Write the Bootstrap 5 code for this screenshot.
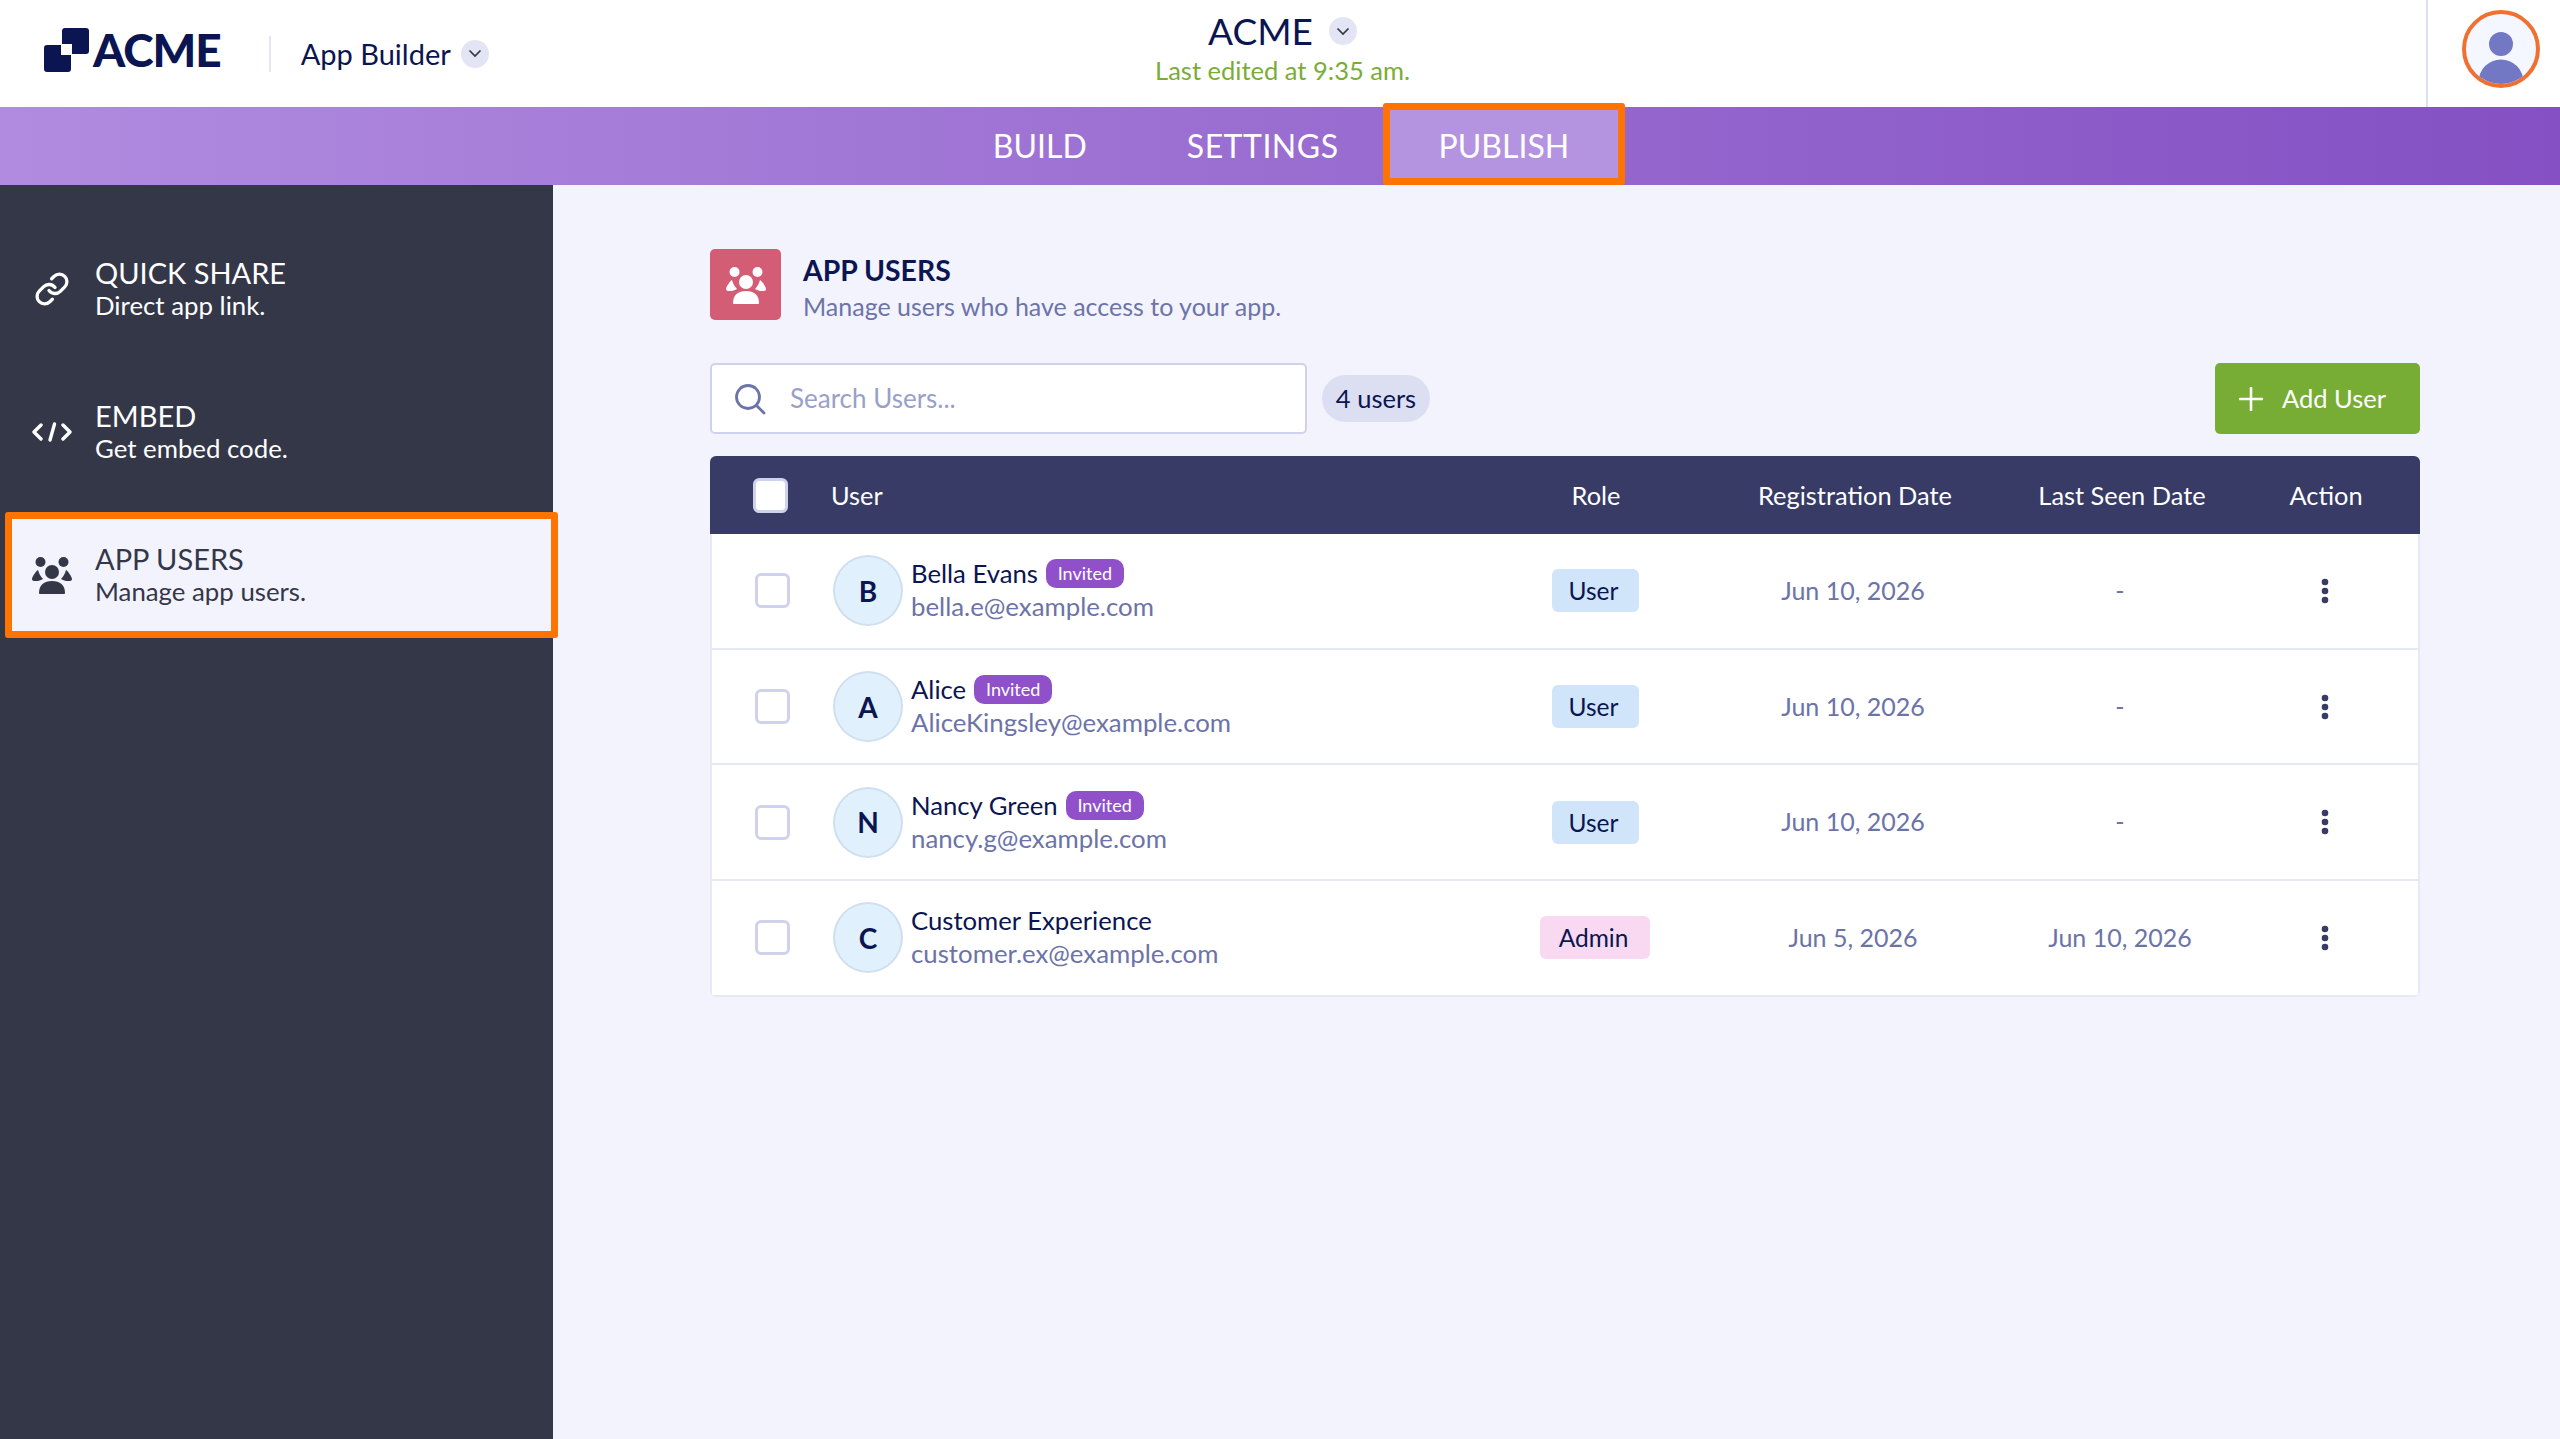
<!DOCTYPE html>
<html lang="en">
<head>
    <meta charset="UTF-8">
    <meta name="viewport" content="width=device-width, initial-scale=1.0">
    <title>App Users</title>
    <link rel="stylesheet" href="https://cdn.jsdelivr.net/npm/bootstrap@5.3.0/dist/css/bootstrap.min.css">
    <style>
        body { font-family: "Lato", "Liberation Sans", sans-serif; font-size: 25px; color: #0a1551; background: #f3f3fe; height: 100vh; }
        .top-bar { height: 107px; background: #fff; }
        .bar-side { flex: 1 1 0; }
        .logo-wrap { padding: 0 0 7px 44px; }
        .logo-text { font-size: 46px; font-weight: 900; line-height: 1; letter-spacing: -1px; margin-left: 3px; }
        .logo-divider { width: 2px; height: 36px; background: #e3e5f5; margin: 0 30px 0 48px; }
        .builder-name { font-size: 29px; margin-right: 10px; }
        .chevron-dot { width: 28px; height: 28px; background: #e3e5f5; }
        .app-block { padding: 9px 0 0 5px; }
        .app-name { font-size: 37px; line-height: 44px; }
        .last-edited { font-size: 25.500px; line-height: 34px; color: #7aad37; }
        .profile-box { width: 134px; border-left: 2px solid #dde0f3; padding: 0 20px 10px 0; }
        .profile-circle { width: 78px; height: 78px; border: 4px solid #f07030; background: #f4f7ff; overflow: hidden; }
        .tab-bar { height: 78px; padding-left: 2px; background: linear-gradient(90deg, #b08bdf, #8450c3); }
        .tab-link { padding: 0 50px; font-size: 32px; color: #fff; text-decoration: none; line-height: 78px; }
        .tab-settings { letter-spacing: .5px; }
        .tab-link.active { background: #b494e0; position: relative; }
        .tab-link.active::after, .side-item.active::after { content: ""; position: absolute; border: 7px solid #ff7300; border-radius: 3px; }
        .tab-link.active::after { inset: -4px -6px 0; }
        .side-panel { width: 553px; background: #343748; padding: 48px 2px 0 12px; gap: 31px; }
        .side-item { height: 112px; padding-left: 20px; gap: 23px; color: #fff; }
        .side-item.active { background: #f3f3fe; color: #343748; position: relative; }
        .side-item.active::after { inset: -7px; }
        .side-icon-sm { margin: 0 2px; }
        .side-title { font-size: 29px; line-height: 32px; margin-bottom: 1px; }
        .side-sub { font-size: 25.800px; line-height: 31px; }
        .content { padding: 64px 140px 0 157px; }
        .page-head { height: 71px; gap: 22px; }
        .page-tile { width: 71px; height: 71px; background: #d45d76; border-radius: 5px; }
        .page-title { font-size: 28.400px; line-height: 32px; font-weight: 700; margin-top: 5px; }
        .page-sub { font-size: 25px; line-height: 28px; margin-top: 6px; color: #6c73a8; }
        .tool-row { margin-top: 43px; }
        .search-box { width: 597px; height: 71px; background: #fff; border: 2px solid #ced2ec; border-radius: 5px; padding-left: 22px; gap: 24px; }
        .search-box input { border: 0; outline: 0; padding: 0; font-size: 26px; color: #0a1551; flex: 1; min-width: 0; background: transparent; }
        .search-box input::placeholder { color: #9a9fc9; }
        .count-pill { height: 47px; width: 108px; background: #dcdff1; margin-left: 15px; font-size: 25.500px; }
        .add-btn { width: 205px; height: 71px; padding: 0 0 0 24px; background: #78ad35; color: #fff; font-size: 25.500px; border: 0; border-radius: 5px; gap: 19px; }
        .users-wrap { margin-top: 22px; border-radius: 6px; overflow: hidden; }
        .users-table { table-layout: fixed; border-collapse: separate; border-spacing: 0; width: 1710px; margin: 0; }
        .col-tick { width: 115px; }
        .col-user { width: 669px; }
        .col-role { width: 204px; }
        .col-reg { width: 314px; }
        .col-seen { width: 220px; }
        .col-action { width: 188px; }
        .users-table th { height: 78px; background: #373b66; color: #fff; font-weight: 400; font-size: 25.400px; border: 0; padding: 0; vertical-align: middle; }
        .users-table th.th-user { padding-left: 6px; }
        .users-table td { height: 115.700px; background: #fff; border: 0; border-bottom: 2px solid #e6e8f7; padding: 0 4px 0 0; vertical-align: middle; font-size: 25px; color: #6c73a8; }
        .users-table td:first-child { border-left: 2px solid #e6e8f7; }
        .users-table td:last-child { border-right: 2px solid #e6e8f7; padding-right: 0; }
        .users-table td.td-role { padding-right: 2px; }
        .tick { width: 35px; height: 35px; margin: 0 0 0 43px; border: 3px solid #ced2ec; border-radius: 6px; background-color: #fff; float: none; }
        .user-avatar { width: 70px; height: 71px; background: #e0f1fd; border: 2px solid #cfdff0; color: #0a1551; font-size: 28px; font-weight: 700; flex-shrink: 0; margin-left: 8px; }
        .user-text { padding-bottom: 1px; }
        .user-name { font-size: 25.700px; line-height: 31px; margin-bottom: 2px; color: #0a1551; gap: 8px; }
        .user-mail { font-size: 25.800px; line-height: 31px; color: #6c73a8; }
        .invited { height: 29px; width: 78px; background: #9050ca; color: #fff; font-size: 18px; border-radius: 10px; }
        .role-chip { display: inline-block; height: 43px; line-height: 43px; padding-right: 3px; border-radius: 6px; font-size: 24.500px; color: #0a1551; }
        .role-user { width: 87px; background: #d0e5fa; }
        .role-admin { width: 110px; background: #f9d9f2; }
    </style>
</head>
<body class="d-flex flex-column">

<header class="top-bar d-flex">
    <div class="bar-side d-flex align-items-center">
        <div class="logo-wrap d-flex align-items-center">
            <svg width="46" height="44" viewBox="0 0 46 44"><rect x="18" y="0" width="27" height="26" rx="3" fill="#0a1551"/><rect x="0" y="17" width="27" height="27" rx="3" fill="#0a1551"/><rect x="17" y="16" width="11" height="11" fill="#fff"/></svg>
            <span class="logo-text">ACME</span>
        </div>
        <div class="logo-divider"></div>
        <span class="builder-name">App Builder</span>
        <span class="chevron-dot rounded-circle d-flex align-items-center justify-content-center"><svg width="14" height="9" viewBox="0 0 14 9"><path d="M1.5 1.5 7 7l5.500-5.500" fill="none" stroke="#343748" stroke-width="1.700"/></svg></span>
    </div>
    <div class="app-block d-flex flex-column align-items-center">
        <div class="d-flex align-items-center gap-3"><span class="app-name">ACME</span><span class="chevron-dot rounded-circle d-flex align-items-center justify-content-center"><svg width="14" height="9" viewBox="0 0 14 9"><path d="M1.5 1.5 7 7l5.500-5.500" fill="none" stroke="#343748" stroke-width="1.700"/></svg></span></div>
        <div class="last-edited">Last edited at 9:35 am.</div>
    </div>
    <div class="bar-side d-flex justify-content-end">
        <div class="profile-box d-flex align-items-center justify-content-end">
            <div class="profile-circle rounded-circle">
                <svg width="70" height="70" viewBox="0 0 70 70"><circle cx="35" cy="30" r="12" fill="#7278c4"/><circle cx="35" cy="68" r="22.500" fill="#7278c4"/></svg>
            </div>
        </div>
    </div>
</header>

<nav class="tab-bar d-flex justify-content-center">
    <a class="tab-link" href="#">BUILD</a>
    <a class="tab-link tab-settings" href="#">SETTINGS</a>
    <a class="tab-link active" href="#">PUBLISH</a>
</nav>

<div class="d-flex flex-grow-1">
    <aside class="side-panel d-flex flex-column flex-shrink-0">
        <div class="side-item d-flex align-items-center">
            <svg class="side-icon-sm" width="36" height="36" viewBox="0 0 24 24" fill="none" stroke="#fff" stroke-width="2.200" stroke-linecap="round" stroke-linejoin="round"><path d="M10 13a5 5 0 0 0 7.540.540l3-3a5 5 0 0 0-7.070-7.070l-1.720 1.710"/><path d="M14 11a5 5 0 0 0-7.540-.540l-3 3a5 5 0 0 0 7.070 7.070l1.710-1.710"/></svg>
            <div><div class="side-title">QUICK SHARE</div><div class="side-sub">Direct app link.</div></div>
        </div>
        <div class="side-item d-flex align-items-center">
            <svg width="40" height="40" viewBox="0 0 40 40" fill="none" stroke="#fff" stroke-width="3.400" stroke-linecap="round" stroke-linejoin="round"><path d="M9 13 2 20l7 7"/><path d="M31 13l7 7-7 7"/><path d="M22.500 12 18 28"/></svg>
            <div><div class="side-title">EMBED</div><div class="side-sub">Get embed code.</div></div>
        </div>
        <div class="side-item active d-flex align-items-center">
            <svg width="40" height="40" viewBox="0 0 40 40" fill="#343748"><circle cx="8.500" cy="7" r="5"/><circle cx="31.500" cy="7" r="5"/><circle cx="20" cy="17" r="7"/><path d="M7 38c0-8 5-12 13-12s13 4 13 12c0 .5-.5 1-1 1H8c-.5 0-1-.5-1-1z"/><path d="M0 24c0-2 4-8 6-9 1 4 3 7 5 9-1 .5-3 1.500-5 2H2c-1 0-2-1-2-2z"/><path d="M40 24c0-2-4-8-6-9-1 4-3 7-5 9 1 .5 3 1.500 5 2h4c1 0 2-1 2-2z"/></svg>
            <div><div class="side-title">APP USERS</div><div class="side-sub">Manage app users.</div></div>
        </div>
    </aside>

    <main class="content flex-grow-1">
        <div class="page-head d-flex">
            <div class="page-tile d-flex align-items-center justify-content-center flex-shrink-0">
                <svg width="40" height="40" viewBox="0 0 40 40" fill="#fff"><circle cx="8.500" cy="7" r="5"/><circle cx="31.500" cy="7" r="5"/><circle cx="20" cy="17" r="7"/><path d="M7 38c0-8 5-12 13-12s13 4 13 12c0 .5-.5 1-1 1H8c-.5 0-1-.5-1-1z"/><path d="M0 24c0-2 4-8 6-9 1 4 3 7 5 9-1 .5-3 1.500-5 2H2c-1 0-2-1-2-2z"/><path d="M40 24c0-2-4-8-6-9-1 4-3 7-5 9 1 .5 3 1.500 5 2h4c1 0 2-1 2-2z"/></svg>
            </div>
            <div>
                <div class="page-title">APP USERS</div>
                <div class="page-sub">Manage users who have access to your app.</div>
            </div>
        </div>

        <div class="tool-row d-flex align-items-center">
            <div class="search-box d-flex align-items-center">
                <svg width="32" height="32" viewBox="0 0 32 32" fill="none" stroke="#6c73a8" stroke-width="2.800" stroke-linecap="round"><circle cx="14" cy="14" r="11.500"/><path d="M23 23l7 7"/></svg>
                <input type="text" placeholder="Search Users...">
            </div>
            <span class="count-pill rounded-pill d-flex align-items-center justify-content-center">4 users</span>
            <button class="add-btn ms-auto d-flex align-items-center" type="button">
                <svg width="24" height="24" viewBox="0 0 24 24" stroke="#fff" stroke-width="2.600" stroke-linecap="round"><path d="M12 1v22M1 12h22"/></svg>
                Add User
            </button>
        </div>

        <div class="users-wrap">
            <table class="table users-table align-middle">
                <colgroup><col class="col-tick"><col class="col-user"><col class="col-role"><col class="col-reg"><col class="col-seen"><col class="col-action"></colgroup>
                <thead>
                    <tr>
                        <th><input class="form-check-input tick d-block" type="checkbox"></th>
                        <th class="th-user">User</th>
                        <th class="text-center">Role</th>
                        <th class="text-center">Registration Date</th>
                        <th class="text-center">Last Seen Date</th>
                        <th class="text-center">Action</th>
                    </tr>
                </thead>
                <tbody id="userRows"></tbody>
            </table>
        </div>
    </main>
</div>

<script>
    const users = [
        { name: 'Bella Evans', mail: 'bella.e@example.com', role: 'User', invited: true, reg: 'Jun 10, 2026', seen: '-' },
        { name: 'Alice', mail: 'AliceKingsley@example.com', role: 'User', invited: true, reg: 'Jun 10, 2026', seen: '-' },
        { name: 'Nancy Green', mail: 'nancy.g@example.com', role: 'User', invited: true, reg: 'Jun 10, 2026', seen: '-' },
        { name: 'Customer Experience', mail: 'customer.ex@example.com', role: 'Admin', invited: false, reg: 'Jun 5, 2026', seen: 'Jun 10, 2026' }
    ];

    // Build the table rows
    document.getElementById('userRows').innerHTML = users.map(u => `
        <tr>
            <td><input class="form-check-input tick d-block" type="checkbox"></td>
            <td>
                <div class="d-flex align-items-center">
                    <div class="user-avatar rounded-circle d-flex align-items-center justify-content-center">${u.name[0]}</div>
                    <div class="user-text ms-2">
                        <div class="user-name d-flex align-items-center">${u.name}${u.invited ? '<span class="invited d-flex align-items-center justify-content-center">Invited</span>' : ''}</div>
                        <div class="user-mail">${u.mail}</div>
                    </div>
                </div>
            </td>
            <td class="td-role text-center"><span class="role-chip ${u.role === 'User' ? 'role-user' : 'role-admin'}">${u.role}</span></td>
            <td class="text-center">${u.reg}</td>
            <td class="text-center">${u.seen}</td>
            <td class="text-center"><svg class="d-block mx-auto" width="10" height="26" viewBox="0 0 10 26" fill="#373b66"><circle cx="5" cy="4" r="3.300"/><circle cx="5" cy="13" r="3.300"/><circle cx="5" cy="22" r="3.300"/></svg></td>
        </tr>`).join('');
</script>
<script src="https://cdn.jsdelivr.net/npm/bootstrap@5.3.0/dist/js/bootstrap.bundle.min.js"></script>
</body>
</html>
